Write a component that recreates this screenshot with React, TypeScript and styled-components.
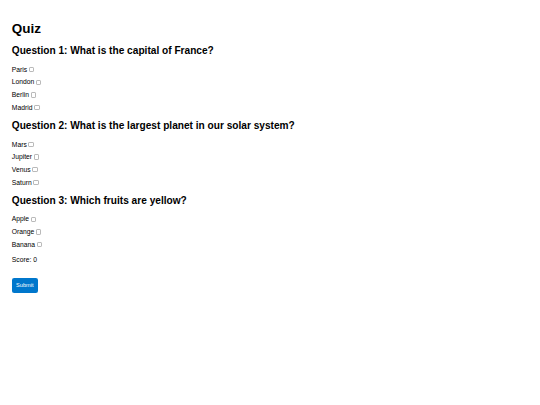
import { useState } from 'react';
import styled, { createGlobalStyle } from 'styled-components';

// the reference is a 1280px-wide page shown at 540px, so sizes are written
// in the original units and scaled down
const SCALE = 540 / 1280;
const px = (n: number) => `${(n * SCALE).toFixed(2)}px`;

const GlobalStyles = createGlobalStyle`
  html, body {
    margin: 0;
    background: #ffffff;
  }
  body {
    font-family: 'Liberation Sans', Arial, sans-serif;
    color: #000000;
  }
`;

const Page = styled('div')({
  padding: `${px(28)} ${px(28)}`,
});

const Title = styled('h1')({
  fontSize: px(32),
  lineHeight: px(36.8),
  fontWeight: 700,
  margin: `${px(21.44)} 0`,
});

const QuestionTitle = styled('h2')({
  fontSize: px(24),
  lineHeight: px(27.6),
  fontWeight: 700,
  margin: `${px(19.92)} 0`,
});

const OptionRow = styled('div')({
  height: px(20),
  marginBottom: px(10),
  display: 'flex',
  alignItems: 'center',
});

const OptionLabel = styled('label')({
  display: 'flex',
  alignItems: 'center',
  fontSize: px(16),
  lineHeight: px(18.4),
  cursor: 'pointer',
});

const Checkbox = styled('input')({
  appearance: 'none',
  width: px(13),
  height: px(13),
  margin: `0 0 0 ${px(4)}`,
  border: '1px solid #b9b9b9',
  borderRadius: px(2.5),
  background: '#ffffff',
  boxSizing: 'border-box',
  cursor: 'pointer',
  '&:checked': {
    background: '#0077cc',
    borderColor: '#0077cc',
  },
});

const Score = styled('p')({
  fontSize: px(16),
  lineHeight: px(18.4),
  margin: `${px(16)} 0`,
});

const SubmitButton = styled('button')({
  marginTop: px(18),
  padding: px(10),
  fontFamily: "'Liberation Sans', Arial, sans-serif",
  fontSize: px(13.33),
  lineHeight: px(15.3),
  color: '#ffffff',
  background: '#0077cc',
  border: 'none',
  borderRadius: px(5),
  cursor: 'pointer',
});

type Question = {
  title: string;
  options: string[];
  answers: string[];
};

const questions: Question[] = [
  {
    title: 'Question 1: What is the capital of France?',
    options: ['Paris', 'London', 'Berlin', 'Madrid'],
    answers: ['Paris'],
  },
  {
    title: 'Question 2: What is the largest planet in our solar system?',
    options: ['Mars', 'Jupiter', 'Venus', 'Saturn'],
    answers: ['Jupiter'],
  },
  {
    title: 'Question 3: Which fruits are yellow?',
    options: ['Apple', 'Orange', 'Banana'],
    answers: ['Banana'],
  },
];

const App = () => {
  const [selected, setSelected] = useState<Record<string, boolean>>({});
  const [score, setScore] = useState(0);

  const toggle = (key: string) =>
    setSelected((prev) => ({ ...prev, [key]: !prev[key] }));

  const submit = () => {
    const total = questions.reduce((sum, q, qi) => {
      const right = q.options.every(
        (o) => !!selected[`${qi}-${o}`] === q.answers.includes(o)
      );
      return sum + (right ? 1 : 0);
    }, 0);
    setScore(total);
  };

  return (
    <>
      <GlobalStyles />
      <Page>
        <Title>Quiz</Title>
        {questions.map((q, qi) => (
          <div key={q.title}>
            <QuestionTitle>{q.title}</QuestionTitle>
            {q.options.map((o) => (
              <OptionRow key={o}>
                <OptionLabel>
                  {o}
                  <Checkbox
                    type="checkbox"
                    checked={!!selected[`${qi}-${o}`]}
                    onChange={() => toggle(`${qi}-${o}`)}
                  />
                </OptionLabel>
              </OptionRow>
            ))}
          </div>
        ))}
        <Score>Score: {score}</Score>
        <SubmitButton onClick={submit}>Submit</SubmitButton>
      </Page>
    </>
  );
};

export default App;
